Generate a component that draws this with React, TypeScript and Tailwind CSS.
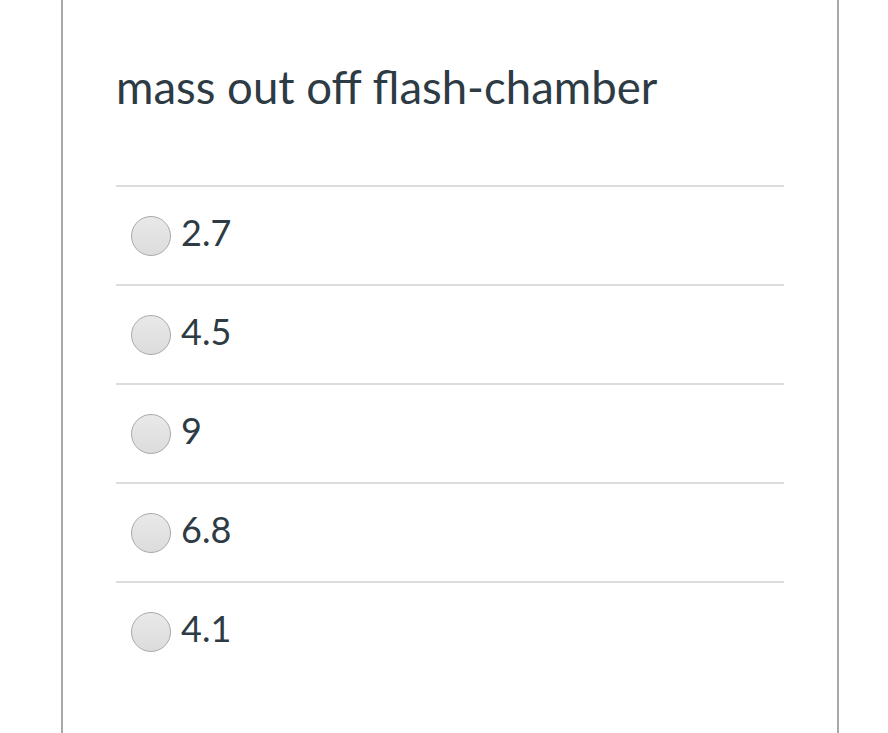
const options = ['2.7', '4.5', '9', '6.8', '4.1'];

function Radio() {
  return (
    <span className="block h-[40px] w-[40px] shrink-0 rounded-full border border-[#a9a9a9] bg-gradient-to-b from-[#e9e9e9] to-[#dcdcdc]" />
  );
}

export default function App() {
  return (
    <div className="h-[733px] w-[888px] overflow-hidden bg-white" style={{ fontFamily: 'Lato, "Open Sans", sans-serif' }}>
      <div className="ml-[61px] h-full w-[778px] border-x-2 border-[#a8a8a8] pl-[53px] pr-[53px] pt-[60px]">
        <h1 className="text-[45.5px] leading-[54px] font-normal text-[#2d3b45]">mass out off flash-chamber</h1>
        <div className="mt-[71px]">
          {options.map((opt) => (
            <div key={opt} className="flex h-[99px] items-center gap-[10px] border-t-2 border-[#dcdcdc] pl-[15px]">
              <Radio />
              <span className="pb-[7px] text-[36px] leading-[44px] text-[#2d3b45]">{opt}</span>
            </div>
          ))}
        </div>
      </div>
    </div>
  );
}
